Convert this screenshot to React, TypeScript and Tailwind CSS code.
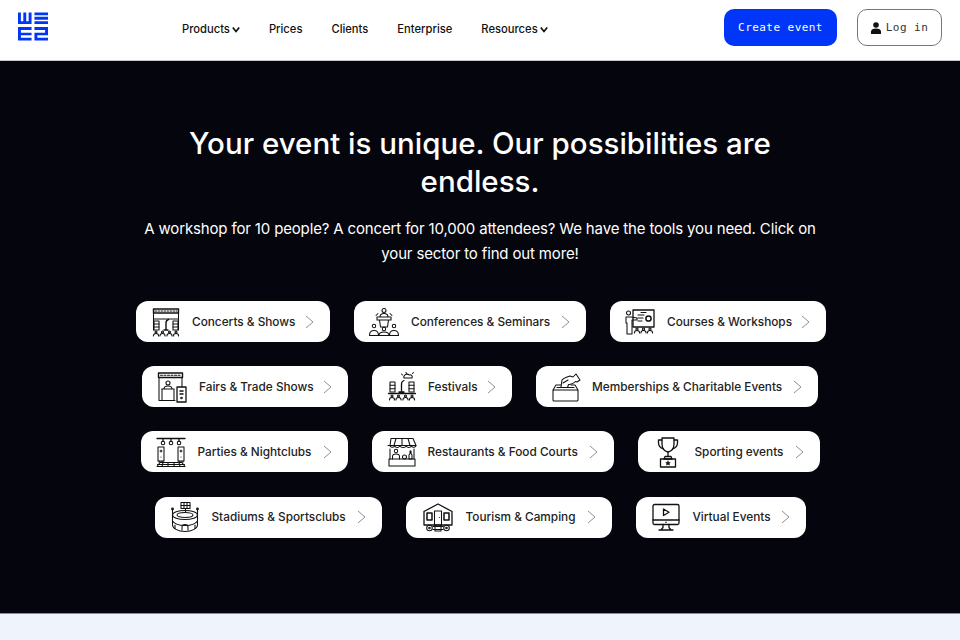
import React from "react";

const S = ({ children, w = 32, h = 32 }: { children: React.ReactNode; w?: number; h?: number }) => (
  <svg width={w} height={h} viewBox="0 0 32 32" fill="none" stroke="#111" strokeWidth={1.05} strokeLinecap="round" strokeLinejoin="round">
    {children}
  </svg>
);

const P = ({ x, y, r = 1.2 }: { x: number; y: number; r?: number }) => (
  <g>
    <circle cx={x} cy={y} r={r} />
    <path d={`M${x - 2.6} ${y + 4}c0-1.8 1-2.6 2.6-2.6s2.6.8 2.6 2.6`} />
  </g>
);

const Speaker = ({ x, y, h = 9 }: { x: number; y: number; h?: number }) => (
  <g>
    <rect x={x} y={y} width={5} height={h} />
    <path d={`M${x} ${y + h / 3}h5M${x} ${(y + (2 * h) / 3)}h5`} />
  </g>
);

const Concerts = () => (
  <S>
    <rect x={3.5} y={3} width={25} height={4} strokeWidth={1.4} />
    <path d="M5 5h22" strokeDasharray="1.5 1.5" />
    <path d="M3.5 7v17M28.5 7v17M3.5 13h25" />
    <Speaker x={4} y={15} />
    <Speaker x={23} y={15} />
    <path d="M16 24v-7c0-2 1-3 2.5-3.5M14 24h4" strokeWidth={1.4} />
    <P x={6} y={26} r={1} />
    <P x={12.5} y={26} r={1} />
    <P x={19.5} y={26} r={1} />
    <P x={26} y={26} r={1} />
  </S>
);
const Conferences = () => (
  <S>
    <circle cx={16} cy={4.5} r={2} />
    <path d="M12 11c0-2.5 1.5-3.5 4-3.5s4 1 4 3.5M9 11h14v3H9zM11.5 14l1 7h7l1-7M8 9.500l2-2M24 9.500l-2-2" />
    <circle cx={6} cy={20} r={1.7} />
    <circle cx={16} cy={23} r={1.7} />
    <circle cx={26} cy={20} r={1.7} />
    <path d="M1.500 29.500c0-3 1.500-5 4.500-5s4.500 2 4.500 5M11 29.500c0-2 1.500-3.500 5-3.500s5 1.500 5 3.500M21.500 29.500c0-3 1.500-5 4.500-5s4.500 2 4.500 5M1.500 29.500h29" />
  </S>
);
const Courses = () => (
  <S>
    <rect x={9} y={4} width={21} height={17} strokeWidth={1.3} />
    <circle cx={4.5} cy={7} r={2} />
    <path d="M2 11h5l6 1v2l-5 0v14H3V17H2z" />
    <path d="M14 9h6M17 6.500h5M14 12h5M14 15h4" />
    <circle cx={24.500} cy={12.500} r={2.6} strokeWidth={1.5} />
    <P x={13} y={23} r={1.1} />
    <P x={19.500} y={23} r={1.1} />
    <P x={26} y={23} r={1.1} />
  </S>
);
const Fairs = () => (
  <S>
    <rect x={2.500} y={2} width={24} height={4.500} strokeWidth={1.4} />
    <path d="M4.500 4.300h20" strokeDasharray="2 1.500" />
    <path d="M3 6.500v23h16M26 6.500v9" />
    <circle cx={12} cy={12} r={2} />
    <path d="M8 18c0-2 1.500-3 4-3s4 1 4 3M6 18h12v11" />
    <path d="M6 18v11" />
    <rect x={21} y={16} width={9} height={15} strokeWidth={1.3} />
    <path d="M24 20h3M24 23h3" strokeWidth={1.5} />
    <circle cx={25.500} cy={27} r={.8} />
  </S>
);
const Festivals = () => (
  <S>
    <path d="M18 7c-1-3 3-5 5-3 2-1 4 1 3 3z" />
    <path d="M20 1.500l.5 1M15.500 3l1 1M27.500 1.500l-1 1" />
    <Speaker x={4} y={11} h={10} />
    <Speaker x={23} y={11} h={10} />
    <path d="M15.500 21v-8c0-2 1-3 2.500-3.500M13 21h5M2.500 22.500h27" strokeWidth={1.3} />
    <P x={6} y={25} r={1} />
    <P x={12.500} y={25} r={1} />
    <P x={19.500} y={25} r={1} />
    <P x={26} y={25} r={1} />
  </S>
);
const Memberships = () => (
  <S>
    <rect x={3} y={19} width={25} height={11} rx={1} />
    <path d="M3 19l3-5h5M28 19l-3-5h-4M7 16.500h17" />
    <path d="M11 16l1-7c1.500-2 5-3 8-4l3 1 3-3 4 6-3 2-1.500-.5c-2 2-4 3.500-7 3l-1 3" />
    <path d="M13 12l5-3" />
  </S>
);
const Parties = () => (
  <S>
    <path d="M2 2.500h28M8 2.500v3M16 2.500v3M24 2.500v3" strokeWidth={1.3} />
    <circle cx={8} cy={7} r={1.800} />
    <circle cx={16} cy={7} r={1.800} />
    <circle cx={24} cy={7} r={1.800} />
    <rect x={3} y={11} width={6} height={14} />
    <rect x={23} y={11} width={6} height={14} />
    <path d="M6 14v2M5 15h2M26 14v2M25 15h2M6 21h.01M26 21h.01M4 25v1h4v-1M24 25v1h4v-1" />
    <path d="M5 26.500h22l3 4H2zM2.500 28.500h27M8 26.500l-1 4M13 26.500v4M19 26.500v4M24 26.500l1 4" />
  </S>
);
const Restaurants = () => (
  <S>
    <path d="M5 2.500h22l3 7c0 2-3.500 2.500-4.700.5-1 2-4 2-5 0-1 2-5 2-6.600 0-1 2-4 2-5 0-1.200 2-4.700 1.500-4.700-.5z" />
    <path d="M2 9.500h28M10 2.500L8 9.500M16 2.500v7M22 2.500l2 7" />
    <path d="M4 13v10M28 13v10" />
    <rect x={3} y={23} width={26} height={7} />
    <circle cx={10} cy={15} r={1.700} />
    <path d="M6.500 23v-2.500c0-1.500 1.500-2.500 3.500-2.500s3.500 1 3.500 2.500V23" />
    <circle cx={18.500} cy={21} r={2} />
    <path d="M23 23v-4l1-1.500V15h1v2.500l1 1.500v4z" />
  </S>
);
const Sporting = () => (
  <S>
    <path d="M10 2h12v6c0 4-2 7-6 8-4-1-6-4-6-8z" strokeWidth={1.3} />
    <path d="M10 4H6.500v3c0 3 2 5 5 6M22 4h3.500v3c0 3-2 5-5 6M16 16v4M13 20.500h6l1 2.500h-8z" strokeWidth={1.3} />
    <rect x={8.500} y={23} width={15} height={8} strokeWidth={1.3} />
    <path d="M16 25l.7 1.500 1.600.1-1.200 1 .4 1.500-1.500-.8-1.500.8.400-1.500-1.200-1 1.600-.1z" fill="#111" strokeWidth={.6} />
  </S>
);
const Stadiums = () => (
  <S>
    <rect x={12} y={1.500} width={9} height={6} />
    <path d="M15 1.500v6M18 1.500v6M12 4.500h9M16.500 7.500v3" />
    <ellipse cx={16} cy={14} rx={12.500} ry={4.500} />
    <ellipse cx={16} cy={14} rx={8} ry={2.500} />
    <path d="M3.500 14v10c0 3 5 6.500 12.500 6.500S28.500 27 28.500 24V14M3.500 20c2 3 7 4.500 12.500 4.500S26.500 23 28.500 20" />
    <path d="M13 29v-3c0-1.500 1-2.500 3-2.500s3 1 3 2.500v3M6 24v3.500M26 24v3.500M3.500 8v6M28.500 8v6" />
    <circle cx={3.500} cy={8} r={.9} />
    <circle cx={28.500} cy={8} r={.9} />
  </S>
);
const Tourism = () => (
  <S>
    <path d="M2 10.500L16 3l14 7.500M2 10.500V24h28V10.500" strokeWidth={1.3} />
    <rect x={5} y={12} width={5} height={7} strokeWidth={1.5} />
    <rect x={22} y={12} width={5} height={7} strokeWidth={1.5} />
    <rect x={12.500} y={10} width={7} height={14} />
    <path d="M17.500 16.500h.01" />
    <circle cx={7.500} cy={27} r={2.800} />
    <circle cx={24.500} cy={27} r={2.800} />
    <circle cx={7.500} cy={27} r={.8} />
    <circle cx={24.500} cy={27} r={.8} />
    <path d="M11 25.500h10M11 28.500h10M13 24v6h6v-6" />
  </S>
);
const Virtual = () => (
  <S>
    <rect x={3} y={3.500} width={26} height={20} rx={1.500} strokeWidth={1.3} />
    <path d="M3 19h26M13 23.500v3l-2 2.500h10l-2-2.500v-3M9 29h14" strokeWidth={1.3} />
    <path d="M13.500 8v6.500l5.500-3.200z" strokeWidth={1.3} />
    <path d="M16 21.200h.01" strokeWidth={1.5} />
  </S>
);

const items = [
  { label: "Concerts & Shows", Icon: Concerts, cls: "w-[194px] ml-[2px] pl-[14px]", gap: "ml-[10px]" },
  { label: "Conferences & Seminars", Icon: Conferences, cls: "w-[232px] pl-[14px]", gap: "ml-[11px]" },
  { label: "Courses & Workshops", Icon: Courses, cls: "w-[216px] pl-[14px]", gap: "ml-[11px]" },
  { label: "Fairs & Trade Shows", Icon: Fairs, cls: "w-[206px] pl-[14px]", gap: "ml-[11px]" },
  { label: "Festivals", Icon: Festivals, cls: "w-[140px] pl-[14px]", gap: "ml-[10px]" },
  { label: "Memberships & Charitable Events", Icon: Memberships, cls: "w-[282px] pl-[14px]", gap: "ml-[10px]" },
  { label: "Parties & Nightclubs", Icon: Parties, cls: "w-[207px] pl-[14px]", gap: "ml-[11px]" },
  { label: "Restaurants & Food Courts", Icon: Restaurants, cls: "w-[242px] pl-[14px]", gap: "ml-[10px]" },
  { label: "Sporting events", Icon: Sporting, cls: "w-[182px] pl-[14px]", gap: "ml-[11px]" },
  { label: "Stadiums & Sportsclubs", Icon: Stadiums, cls: "w-[227px] pl-[14px]", gap: "ml-[11px]" },
  { label: "Tourism & Camping", Icon: Tourism, cls: "w-[206px] pl-[16px]", gap: "ml-[12px]" },
  { label: "Virtual Events", Icon: Virtual, cls: "w-[170px] pl-[14px]", gap: "ml-[11px]" },
];

const Caret = () => (
  <svg width="8" height="7" viewBox="0 0 8 7" fill="none" stroke="#111" strokeWidth={1.7}>
    <path d="M.8 1.500l3.200 4 3.200-4" />
  </svg>
);

const NavLink = ({ label, caret }: { label: string; caret?: boolean }) => (
  <a className="flex items-center gap-[2px] text-[11.2px] font-medium text-[#111]">
    {label}
    {caret && <Caret />}
  </a>
);

const Logo = () => (
  <svg className="mt-[11px]" width="30" height="31" viewBox="0 0 31 31" fill="#0136f8">
    <path d="M0 1h3v9h2.500V1h3v9H11V1h3v12H0z" />
    <path d="M17 1h14v3H17zM17 5.500h14v3H17zM17 10h14v3H17z" />
    <path d="M0 16h14v3H3v3h11v2.500H3V27h11v3H0z" />
    <path d="M17 16h14v8.500H20V27h11v3H17v-8h11v-3H17z" />
  </svg>
);

export default function App() {
  return (
    <div className="min-h-[640px] bg-[#eff3fb] font-['Inter',sans-serif]">
      <header className="flex h-[61px] items-start border-b border-[#c8c8c8] bg-white pl-[18px] pr-[18px]">
        <Logo />
        <nav className="ml-[134px] mt-[21px] flex items-center gap-[29px]">
          <NavLink label="Products" caret />
          <NavLink label="Prices" />
          <NavLink label="Clients" />
          <NavLink label="Enterprise" />
          <NavLink label="Resources" caret />
        </nav>
        <div className="ml-auto mt-[9px] flex items-center gap-[20px] font-['DejaVu_Sans_Mono',monospace] text-[11px] tracking-[0.45px]">
          <button className="h-[37px] w-[113px] rounded-[10px] bg-[#0136f8] pt-[1px] text-white">Create event</button>
          <button className="flex h-[37px] w-[85px] items-center justify-center gap-[5px] rounded-[10px] border border-[#777] bg-white pt-[1px] text-[#333]">
            <svg width="10" height="12" viewBox="0 0 10 12" fill="#111">
              <circle cx="5" cy="3" r="2.800" />
              <path d="M0 12V9.500C0 7.500 2 6.500 5 6.500s5 1 5 3V12z" />
            </svg>
            Log in
          </button>
        </div>
      </header>
      <main className="h-[552px] bg-[#05050d] pt-[63px]">
        <div className="mx-auto max-w-[690px] text-center text-white">
          <h1 className="text-[29.5px] font-medium leading-[38px]">Your event is unique. Our possibilities are endless.</h1>
          <p className="mt-[16px] text-[15px] leading-[25px] tracking-[-0.15px]">
            A workshop for 10 people? A concert for 10,000 attendees? We have the tools you need. Click on your sector to find out more!
          </p>
        </div>
        <div className="mx-auto mt-[35px] flex w-[700px] flex-wrap justify-center gap-x-[24px] gap-y-[24.2px]">
          {items.map(({ label, Icon, cls, gap }) => (
            <a key={label} className={`flex h-[41px] items-center rounded-[12px] bg-white pr-[16px] text-[11.8px] font-medium text-[#222] ${cls}`}>
              <span className="flex w-[32px] justify-center">
                <Icon />
              </span>
              <span className={`${gap} mt-[2px] whitespace-nowrap`}>{label}</span>
              <svg className="ml-auto" width="9" height="14" viewBox="0 0 9 14" fill="none" stroke="#8f8f8f" strokeWidth={1}>
                <path d="M1 1l7 6-7 6" />
              </svg>
            </a>
          ))}
        </div>
      </main>
      <div className="h-[27px] border-t border-[#8a8d94] bg-[#eff3fb]" />
    </div>
  );
}
